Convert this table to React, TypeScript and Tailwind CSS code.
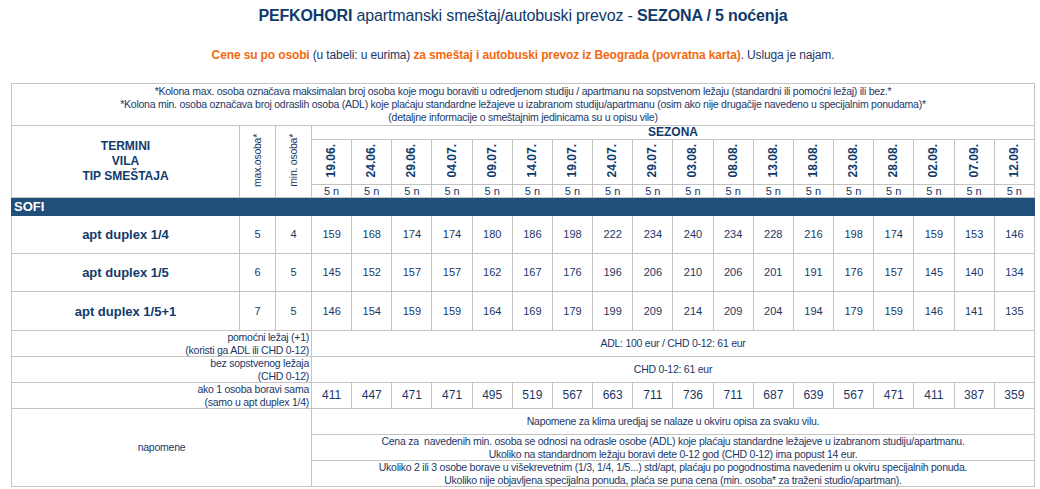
const dates = ['19.06.', '24.06.', '29.06.', '04.07.', '09.07.', '14.07.', '19.07.', '24.07.', '29.07.', '03.08.', '08.08.', '13.08.', '18.08.', '23.08.', '28.08.', '02.09.', '07.09.', '12.09.'];

const rows = [
  { name: 'apt duplex 1/4', max: 5, min: 4, h: 'h-[38px]', prices: [159, 168, 174, 174, 180, 186, 198, 222, 234, 240, 234, 228, 216, 198, 174, 159, 153, 146] },
  { name: 'apt duplex 1/5', max: 6, min: 5, h: 'h-[38px]', prices: [145, 152, 157, 157, 162, 167, 176, 196, 206, 210, 206, 201, 191, 176, 157, 145, 140, 134] },
  { name: 'apt duplex 1/5+1', max: 7, min: 5, h: 'h-[39px]', prices: [146, 154, 159, 159, 164, 169, 179, 199, 209, 214, 209, 204, 194, 179, 159, 146, 141, 135] },
];

const single = [411, 447, 471, 471, 495, 519, 567, 663, 711, 736, 711, 687, 639, 567, 471, 411, 387, 359];

const cell = 'border border-[#c4c4c4] p-0';
const note = 'text-[10.5px] tracking-[-0.25px]';
// bottom info rows: two lines each, a little tighter
const info = `${cell} ${note} leading-[12.5px]`;

export default function App() {
  return (
    <div className="min-h-[489px] bg-white pl-[11px] pr-[5px] text-[#1c3766] font-['Liberation_Sans',Arial,sans-serif]">
      <h1 className="pt-[5px] h-[48px] text-center text-[16px] leading-[22px] tracking-[-0.15px] text-[#0f3a6b]">
        <b>PEFKOHORI</b> apartmanski smeštaj/autobuski prevoz - <b>SEZONA / 5 noćenja</b>
      </h1>
      <p className="h-[35px] text-center text-[12px] leading-[15px] tracking-[-0.13px]">
        <b className="text-[#f26a10]">Cene su po osobi</b> (u tabeli: u eurima){' '}
        <b className="text-[#f26a10]">za smeštaj i autobuski prevoz iz Beograda (povratna karta)</b>. Usluga je najam.
      </p>

      <table className="w-full table-fixed border-collapse text-[11px] leading-[13px]">
        <colgroup>
          <col className="w-[228px]" />
          <col className="w-[36px]" />
          <col className="w-[36px]" />
          {dates.map(d => <col key={d} />)}
        </colgroup>
        <tbody>
          <tr className="h-[42px]">
            <td colSpan={21} className={`${cell} ${note} text-center`}>
              *Kolona max. osoba označava maksimalan broj osoba koje mogu boraviti u odredjenom studiju / apartmanu na sopstvenom ležaju (standardni ili pomoćni ležaj) ili bez.*<br />
              *Kolona min. osoba označava broj odraslih osoba (ADL) koje plaćaju standardne ležajeve u izabranom studiju/apartmanu (osim ako nije drugačije navedeno u specijalnim ponudama)*<br />
              (detaljne informacije o smeštajnim jedinicama su u opisu vile)
            </td>
          </tr>

          {/* header */}
          <tr className="h-[14px]">
            <td rowSpan={3} className={`${cell} text-center font-bold text-[12px] leading-[15px] text-[#0f3a6b]`}>
              TERMINI<br />VILA<br />TIP SMEŠTAJA
            </td>
            <td rowSpan={3} className={`${cell} ${note} text-center`}>
              <span className="inline-block [writing-mode:vertical-rl] rotate-180">max.osoba*</span>
            </td>
            <td rowSpan={3} className={`${cell} ${note} text-center`}>
              <span className="inline-block [writing-mode:vertical-rl] rotate-180">min. osoba*</span>
            </td>
            <td colSpan={18} className={`${cell} text-center font-bold text-[12px] leading-[13px] text-[#0f3a6b]`}>SEZONA</td>
          </tr>
          <tr className="h-[45px]">
            {dates.map(d => (
              <td key={d} className={`${cell} text-center`}>
                <span className="inline-block [writing-mode:vertical-rl] rotate-180 font-bold text-[12px] text-[#0f3a6b]">{d}</span>
              </td>
            ))}
          </tr>
          <tr className="h-[13px]">
            {dates.map(d => (
              <td key={d} className={`${cell} text-center leading-[12px]`}>5 n</td>
            ))}
          </tr>

          <tr className="h-[18px]">
            <td colSpan={21} className="border border-[#224f7a] bg-[#224f7a] px-[2px] py-0 text-left text-[13px] leading-[16px] font-bold text-white">SOFI</td>
          </tr>

          {rows.map(r => (
            <tr key={r.name} className={r.h}>
              <td className={`${cell} text-center font-bold text-[13px] text-[#0f3a6b]`}>{r.name}</td>
              <td className={`${cell} text-center`}>{r.max}</td>
              <td className={`${cell} text-center`}>{r.min}</td>
              {r.prices.map((p, i) => (
                <td key={i} className={`${cell} text-center`}>{p}</td>
              ))}
            </tr>
          ))}

          <tr className="h-[26px]">
            <td colSpan={3} className={`${info} text-right pr-[2px]`}>
              pomoćni ležaj (+1)<br />(koristi ga ADL ili CHD 0-12)
            </td>
            <td colSpan={18} className={`${info} text-center`}>ADL: 100 eur / CHD 0-12: 61 eur</td>
          </tr>
          <tr className="h-[26px]">
            <td colSpan={3} className={`${info} text-right pr-[2px]`}>
              bez sopstvenog ležaja<br />(CHD 0-12)
            </td>
            <td colSpan={18} className={`${info} text-center`}>CHD 0-12: 61 eur</td>
          </tr>
          <tr className="h-[26px]">
            <td colSpan={3} className={`${info} text-right pr-[2px]`}>
              ako 1 osoba boravi sama<br />(samo u apt duplex 1/4)
            </td>
            {single.map((p, i) => (
              <td key={i} className={`${cell} text-center text-[12px]`}>{p}</td>
            ))}
          </tr>

          <tr className="h-[26px]">
            <td colSpan={3} rowSpan={3} className={`${info} text-center`}>napomene</td>
            <td colSpan={18} className={`${info} text-center`}>
              Napomene za klima uredjaj se nalaze u okviru opisa za svaku vilu.
            </td>
          </tr>
          <tr className="h-[26px]">
            <td colSpan={18} className={`${info} text-center`}>
              Cena za&nbsp; navedenih min. osoba se odnosi na odrasle osobe (ADL) koje plaćaju standardne ležajeve u izabranom studiju/apartmanu.<br />
              Ukoliko na standardnom ležaju boravi dete 0-12 god (CHD 0-12) ima popust 14 eur.
            </td>
          </tr>
          <tr className="h-[26px]">
            <td colSpan={18} className={`${info} text-center`}>
              Ukoliko 2 ili 3 osobe borave u višekrevetnim (1/3, 1/4, 1/5...) std/apt, plaćaju po pogodnostima navedenim u okviru specijalnih ponuda.<br />
              Ukoliko nije objavljena specijalna ponuda, plaća se puna cena (min. osoba* za traženi studio/apartman).
            </td>
          </tr>
        </tbody>
      </table>
    </div>
  );
}
